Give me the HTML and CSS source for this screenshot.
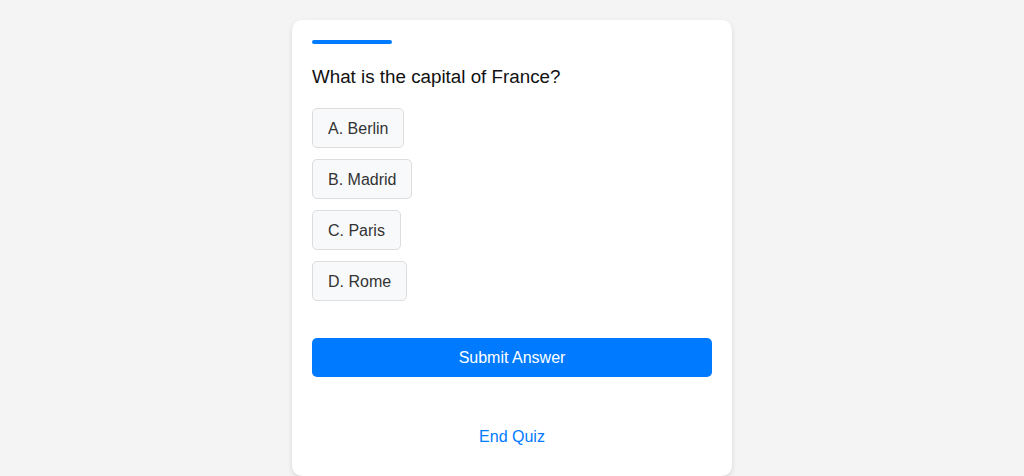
FILE: index.html
```html
<!DOCTYPE html>
<html lang="en">
<head>
<meta charset="utf-8">
<title>Quiz</title>
<link rel="stylesheet" href="styles.css">
</head>
<body>
<main class="card">
  <div class="progress"><div class="progress-fill"></div></div>
  <h2 class="question">What is the capital of France?</h2>
  <div class="options">
    <button class="option">A. Berlin</button>
    <button class="option">B. Madrid</button>
    <button class="option">C. Paris</button>
    <button class="option">D. Rome</button>
  </div>
  <button class="submit">Submit Answer</button>
  <button class="end">End Quiz</button>
</main>
</body>
</html>
```
FILE: styles.css
```css
html, body {
  margin: 0;
  padding: 0;
  background: #f4f4f4;
  font-family: "Liberation Sans", Arial, sans-serif;
}
body {
  display: flex;
  justify-content: center;
  padding-top: 20px;
}
.card {
  box-sizing: border-box;
  width: 440px;
  background: #fff;
  border-radius: 10px;
  box-shadow: 0 2px 5px rgba(0, 0, 0, 0.12);
  padding: 20px;
  display: flex;
  flex-direction: column;
}
.progress {
  width: 80px;
  height: 4px;
  margin-bottom: 22px;
}
.progress-fill {
  height: 100%;
  background: #007bff;
  border-radius: 2px;
}
.question {
  margin: 0 0 20px;
  font-size: 18.8px;
  font-weight: normal;
  line-height: 22px;
  color: #111;
}
.options {
  display: flex;
  flex-direction: column;
  align-items: flex-start;
  gap: 11px;
}
.option {
  box-sizing: border-box;
  height: 40px;
  padding: 1px 15px 0;
  font-family: inherit;
  font-size: 16px;
  color: #333;
  background: #f8f9fa;
  border: 1px solid #ddd;
  border-radius: 5px;
}
.submit {
  margin-top: 37px;
  height: 39px;
  font-family: inherit;
  font-size: 16px;
  color: #fff;
  background: #007bff;
  border: none;
  border-radius: 5px;
}
.end {
  margin-top: 41px;
  height: 38px;
  font-family: inherit;
  font-size: 16px;
  color: #007bff;
  background: transparent;
  border: none;
}
```
